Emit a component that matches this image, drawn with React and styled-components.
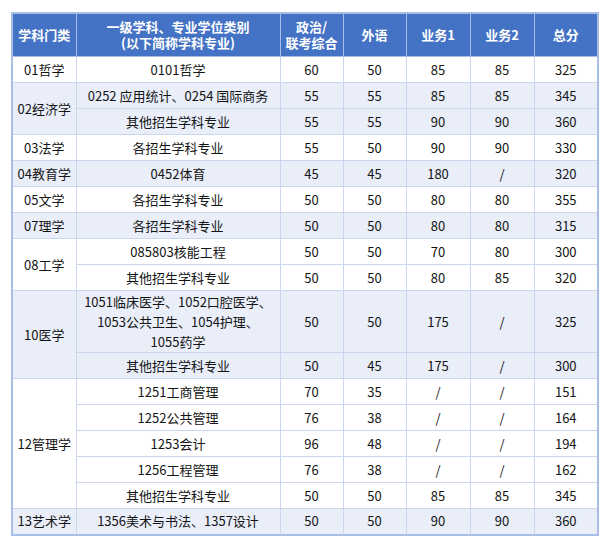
import React from "react";
import styled, { createGlobalStyle } from "styled-components";

const GlobalStyle = createGlobalStyle`
  body {
    margin: 0;
    background: #ffffff;
    font-family: "Noto Sans CJK SC", "Noto Sans", sans-serif;
  }
`;

const groups = [
  { name: "01哲学", rows: [["0101哲学", "60", "50", "85", "85", "325"]] },
  {
    name: "02经济学",
    rows: [
      ["0252 应用统计、0254 国际商务", "55", "55", "85", "85", "345"],
      ["其他招生学科专业", "55", "55", "90", "90", "360"],
    ],
  },
  { name: "03法学", rows: [["各招生学科专业", "55", "50", "90", "90", "330"]] },
  { name: "04教育学", rows: [["0452体育", "45", "45", "180", "/", "320"]] },
  { name: "05文学", rows: [["各招生学科专业", "50", "50", "80", "80", "355"]] },
  { name: "07理学", rows: [["各招生学科专业", "50", "50", "80", "80", "315"]] },
  {
    name: "08工学",
    rows: [
      ["085803核能工程", "50", "50", "70", "80", "300"],
      ["其他招生学科专业", "50", "50", "80", "85", "320"],
    ],
  },
  {
    name: "10医学",
    rows: [
      [
        ["1051临床医学、1052口腔医学、", "1053公共卫生、1054护理、", "1055药学"],
        "50",
        "50",
        "175",
        "/",
        "325",
      ],
      ["其他招生学科专业", "50", "45", "175", "/", "300"],
    ],
  },
  {
    name: "12管理学",
    rows: [
      ["1251工商管理", "70", "35", "/", "/", "151"],
      ["1252公共管理", "76", "38", "/", "/", "164"],
      ["1253会计", "96", "48", "/", "/", "194"],
      ["1256工程管理", "76", "38", "/", "/", "162"],
      ["其他招生学科专业", "50", "50", "85", "85", "345"],
    ],
  },
  { name: "13艺术学", rows: [["1356美术与书法、1357设计", "50", "50", "90", "90", "360"]] },
];

const colWidths = [64, 204, 63, 63, 64, 64, 64];

const ScoreTable = () => {
  return (
    <Wrap>
      <GlobalStyle />
      <Table>
        <colgroup>
          {colWidths.map((w, i) => (
            <col key={i} style={{ width: w }} />
          ))}
        </colgroup>
        <thead>
          <tr>
            <Th>学科门类</Th>
            <Th>
              <HeadLine>一级学科、专业学位类别</HeadLine>
              <HeadLine>(以下简称学科专业)</HeadLine>
            </Th>
            <Th>
              <HeadLine>政治/</HeadLine>
              <HeadLine>联考综合</HeadLine>
            </Th>
            <Th>外语</Th>
            <Th>业务1</Th>
            <Th>业务2</Th>
            <Th>总分</Th>
          </tr>
        </thead>
        <tbody>
          {groups.map((g, gi) =>
            g.rows.map((row, ri) => {
              const [major, ...scores] = row;
              const multi = Array.isArray(major);
              return (
                <Tr key={g.name + ri} $band={gi % 2 === 1} $tall={multi}>
                  {ri === 0 && <Td rowSpan={g.rows.length}>{g.name}</Td>}
                  <Td>
                    {multi
                      ? major.map((line, li) => <Line key={li}>{line}</Line>)
                      : major}
                  </Td>
                  {scores.map((s, si) => (
                    <Td key={si}>{s}</Td>
                  ))}
                </Tr>
              );
            })
          )}
        </tbody>
      </Table>
    </Wrap>
  );
};

const Wrap = styled.div`
  padding: 12px 0 0 11px;
`;

const Table = styled.table`
  width: 586px;
  table-layout: fixed;
  border-collapse: collapse;
  border: 2px solid #a9bee6;
  font-size: 13px;
  color: #141414;
`;

const Th = styled.th`
  height: 42px;
  padding: 0;
  background: #4472c4;
  color: #ffffff;
  font-weight: 700;
  line-height: 16px;
  text-align: center;
  border: 1px solid #a9bee6;
`;

const HeadLine = styled.div`
  height: 16px;
  line-height: 16px;
  overflow: visible;
`;

const Tr = styled.tr`
  height: ${(p) => (p.$tall ? "62px" : "26px")};
  background: ${(p) => (p.$band ? "#e9eef9" : "#ffffff")};
`;

const Td = styled.td`
  padding: 0;
  text-align: center;
  vertical-align: middle;
  line-height: 20px;
  white-space: nowrap;
  border: 1px solid #c9d6ee;
`;

const Line = styled.div`
  line-height: 20px;
`;

export default ScoreTable;
